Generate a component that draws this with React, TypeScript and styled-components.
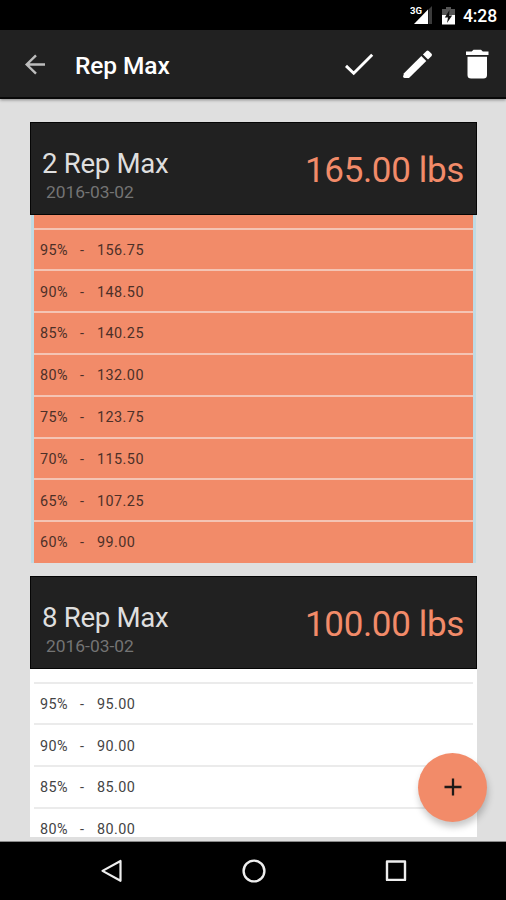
import React from "react";
import styled, { createGlobalStyle } from "styled-components";

const ACCENT = "#f28b69";
const DARK = "#212121";

const GlobalStyle = createGlobalStyle`
  * { box-sizing: border-box; }
  html, body { margin: 0; overflow: hidden; background: #dfdfdf; }
  body { font-family: Roboto, "Liberation Sans", sans-serif; }
  svg { display: block; flex: none; }
`;

const Screen = styled.div`
  position: relative;
  display: flex;
  flex-direction: column;
  width: 506px;
  height: 900px;
  overflow: hidden;
  background: #dfdfdf;
`;

const StatusBar = styled.div`
  display: flex;
  justify-content: flex-end;
  align-items: center;
  flex: none;
  height: 30px;
  padding: 2px 9px 0 0;
  background: #000;
`;

const StatusIcons = styled.div`
  display: flex;
  gap: 8px;
`;

const Clock = styled.span`
  width: 34px;
  margin-left: 8px;
  color: #fff;
  font-size: 17.5px;
  font-weight: 500;
  line-height: 28px;
  letter-spacing: -0.1px;
  white-space: nowrap;
`;

const AppBar = styled.header`
  display: flex;
  align-items: center;
  flex: none;
  height: 69px;
  padding: 0 16px 0 21px;
  background: ${DARK};
  border-bottom: 2px solid #080808;
  box-shadow: 0 1px 3px rgba(0, 0, 0, 0.4);
`;

const Title = styled.h1`
  flex: 1;
  margin: 4px 0 0 26px;
  color: #fff;
  font-size: 24.5px;
  font-weight: 500;
  line-height: 32px;
  letter-spacing: -0.1px;
`;

const Actions = styled.div`
  display: grid;
  grid-template-columns: 57px 63px 26px;
  align-items: center;
`;

const Content = styled.main`
  display: flex;
  flex-direction: column;
  gap: 13px;
  flex: none;
  height: 738px;
  padding: 23px 29px 0 30px;
  overflow: hidden;
`;

const Card = styled.section`
  flex: none;
`;

const CardHeader = styled.div`
  display: flex;
  justify-content: space-between;
  height: 93px;
  padding: 0 12px 0 11px;
  background: ${DARK};
  border: 1px solid #050505;
`;

const CardTitle = styled.h2`
  margin: 24px 0 0;
  color: #dedede;
  font-size: 27.6px;
  font-weight: 400;
  line-height: 34px;
  letter-spacing: -0.3px;
  white-space: nowrap;
`;

const CardDate = styled.div`
  margin: 0 0 0 4px;
  color: #747474;
  font-size: 17.4px;
  line-height: 22px;
`;

const Weight = styled.div`
  margin-top: 26px;
  color: ${ACCENT};
  font-size: 35px;
  line-height: 44px;
  letter-spacing: -0.35px;
  white-space: nowrap;
`;

const List = styled.div<{ $active?: boolean }>`
  height: ${(p) => (p.$active ? 348 : 168)}px;
  padding: 0 4px;
  overflow: hidden;
  background: ${(p) => (p.$active ? "linear-gradient(90deg, #dfdfdf 0 1px, #bfdbe4 1px 446px, #dfdfdf 446px)" : "#fff")};
`;

const ClippedRow = styled.div<{ $active?: boolean }>`
  height: 12.6px;
  background: ${(p) => (p.$active ? ACCENT : "#fff")};
`;

const Row = styled.div<{ $active?: boolean }>`
  display: flex;
  height: 41.8px;
  padding: 1.2px 0 0 6px;
  background: ${(p) => (p.$active ? ACCENT : "#fff")};
  border-top: 2px solid ${(p) => (p.$active ? "#f4c4b4" : "#ebebeb")};
  color: ${(p) => (p.$active ? "#4c3028" : "#444")};
  font-size: 14.4px;
  line-height: 39px;
  letter-spacing: 0.45px;
  white-space: nowrap;

  &:last-child {
    height: 44px;
  }
`;

const Percent = styled.span`
  width: 40px;
`;

const Dash = styled.span`
  width: 17px;
`;

const Fab = styled.button`
  position: absolute;
  left: 418px;
  top: 753px;
  display: grid;
  place-items: center;
  width: 69px;
  height: 69px;
  padding: 0 0 1px;
  border: 0;
  border-radius: 50%;
  background: ${ACCENT};
  box-shadow: 1px 5px 7px rgba(0, 0, 0, 0.22);
`;

const NavBar = styled.nav`
  display: flex;
  align-items: center;
  justify-content: space-between;
  flex: none;
  height: 59px;
  margin-top: 4px;
  padding: 0 97px 0 99px;
  background: #000;
  border-top: 1px solid #8a8a8a;
`;

type Entry = [number, string];

const maxes: { title: string; weight: string; active?: boolean; rows: Entry[] }[] = [
  {
    title: "2 Rep Max",
    weight: "165.00 lbs",
    active: true,
    rows: [
      [95, "156.75"],
      [90, "148.50"],
      [85, "140.25"],
      [80, "132.00"],
      [75, "123.75"],
      [70, "115.50"],
      [65, "107.25"],
      [60, "99.00"],
    ],
  },
  {
    title: "8 Rep Max",
    weight: "100.00 lbs",
    rows: [
      [95, "95.00"],
      [90, "90.00"],
      [85, "85.00"],
      [80, "80.00"],
    ],
  },
];

const SignalIcon = () => (
  <svg width="24" height="20" viewBox="0 0 24 20">
    <path d="M18.5 3.5 22 0V18H18.5Z" fill="#3b3b3b" />
    <path d="M4 18 18 3.5V18Z" fill="#fff" />
    <text x="0" y="8.3" fill="#fff" fontSize="9.5" fontWeight="700" textLength="12" lengthAdjust="spacingAndGlyphs">3G</text>
  </svg>
);

const BatteryIcon = () => (
  <svg width="13" height="20" viewBox="0 0 13 20">
    <path d="M0 3H4V1H9V3H13V10H0Z" fill="#555" />
    <path d="M0 9H13V18.5H0Z" fill="#fff" />
    <path d="M7.5 4 2.8 11.5H6L5 17 10.2 9.5H7Z" fill="#111" />
  </svg>
);

const BackIcon = () => (
  <svg width="28" height="24" viewBox="0 0 28 24" fill="none" stroke="#bdbdbd" strokeWidth="2.4">
    <path d="M24 12.5H6M15 3.4 5.7 12.5 15 21.6" />
  </svg>
);

const CheckIcon = () => (
  <svg width="30" height="32" viewBox="0 0 30 32" fill="none" stroke="#fff" strokeWidth="2.9">
    <path d="M2 17.9 9.7 25.2 28.2 6.7" />
  </svg>
);

const PencilIcon = () => (
  <svg width="32" height="32" viewBox="0 0 32 32" fill="#fff">
    <path d="M3 25.2 20.3 8.1 25.3 13 8 30.1H3.8Q2.2 30 2.2 28.2Z" />
    <path d="M21.9 6.5 25.5 2.9Q26.6 1.9 27.7 2.9L30.6 5.8Q31.4 6.9 30.6 8L27 11.5Z" />
  </svg>
);

const TrashIcon = () => (
  <svg width="26" height="32" viewBox="0 0 26 32" fill="#fff">
    <path d="M2 3.4H7.7L9.5 1.8H17L18.8 3.4H24.5V7H2Z" />
    <path d="M3.5 8.7H23V27Q23 30.6 19.4 30.6H7.1Q3.5 30.6 3.5 27Z" />
  </svg>
);

export default function App() {
  return (
    <>
      <GlobalStyle />
      <Screen>
        <StatusBar>
          <StatusIcons>
            <SignalIcon />
            <BatteryIcon />
          </StatusIcons>
          <Clock>4:28</Clock>
        </StatusBar>
        <AppBar>
          <BackIcon />
          <Title>Rep Max</Title>
          <Actions>
            <CheckIcon />
            <PencilIcon />
            <TrashIcon />
          </Actions>
        </AppBar>
        <Content>
          {maxes.map((m) => (
            <Card key={m.title}>
              <CardHeader>
                <div>
                  <CardTitle>{m.title}</CardTitle>
                  <CardDate>2016-03-02</CardDate>
                </div>
                <Weight>{m.weight}</Weight>
              </CardHeader>
              <List $active={m.active}>
                <ClippedRow $active={m.active} />
                {m.rows.map(([percent, value]) => (
                  <Row key={percent} $active={m.active}>
                    <Percent>{percent}%</Percent>
                    <Dash>-</Dash>
                    <span>{value}</span>
                  </Row>
                ))}
              </List>
            </Card>
          ))}
        </Content>
        <NavBar>
          <svg width="26" height="26" viewBox="0 0 26 26" fill="none" stroke="#eee" strokeWidth="2.2" strokeLinejoin="round">
            <path d="M21.5 3V22.8L3.5 12.9Z" />
          </svg>
          <svg width="26" height="26" viewBox="0 0 26 26" fill="none" stroke="#eee" strokeWidth="2.4">
            <circle cx="13" cy="13" r="10.4" />
          </svg>
          <svg width="26" height="26" viewBox="0 0 26 26" fill="none" stroke="#eee" strokeWidth="2.4" strokeLinejoin="round">
            <rect x="4" y="3.5" width="18" height="18.4" />
          </svg>
        </NavBar>
        <Fab aria-label="Add">
          <svg width="20" height="20" viewBox="0 0 20 20" stroke="#1f1a18" strokeWidth="2.3">
            <path d="M10 1.5V18.5M1.5 10H18.5" />
          </svg>
        </Fab>
      </Screen>
    </>
  );
}
